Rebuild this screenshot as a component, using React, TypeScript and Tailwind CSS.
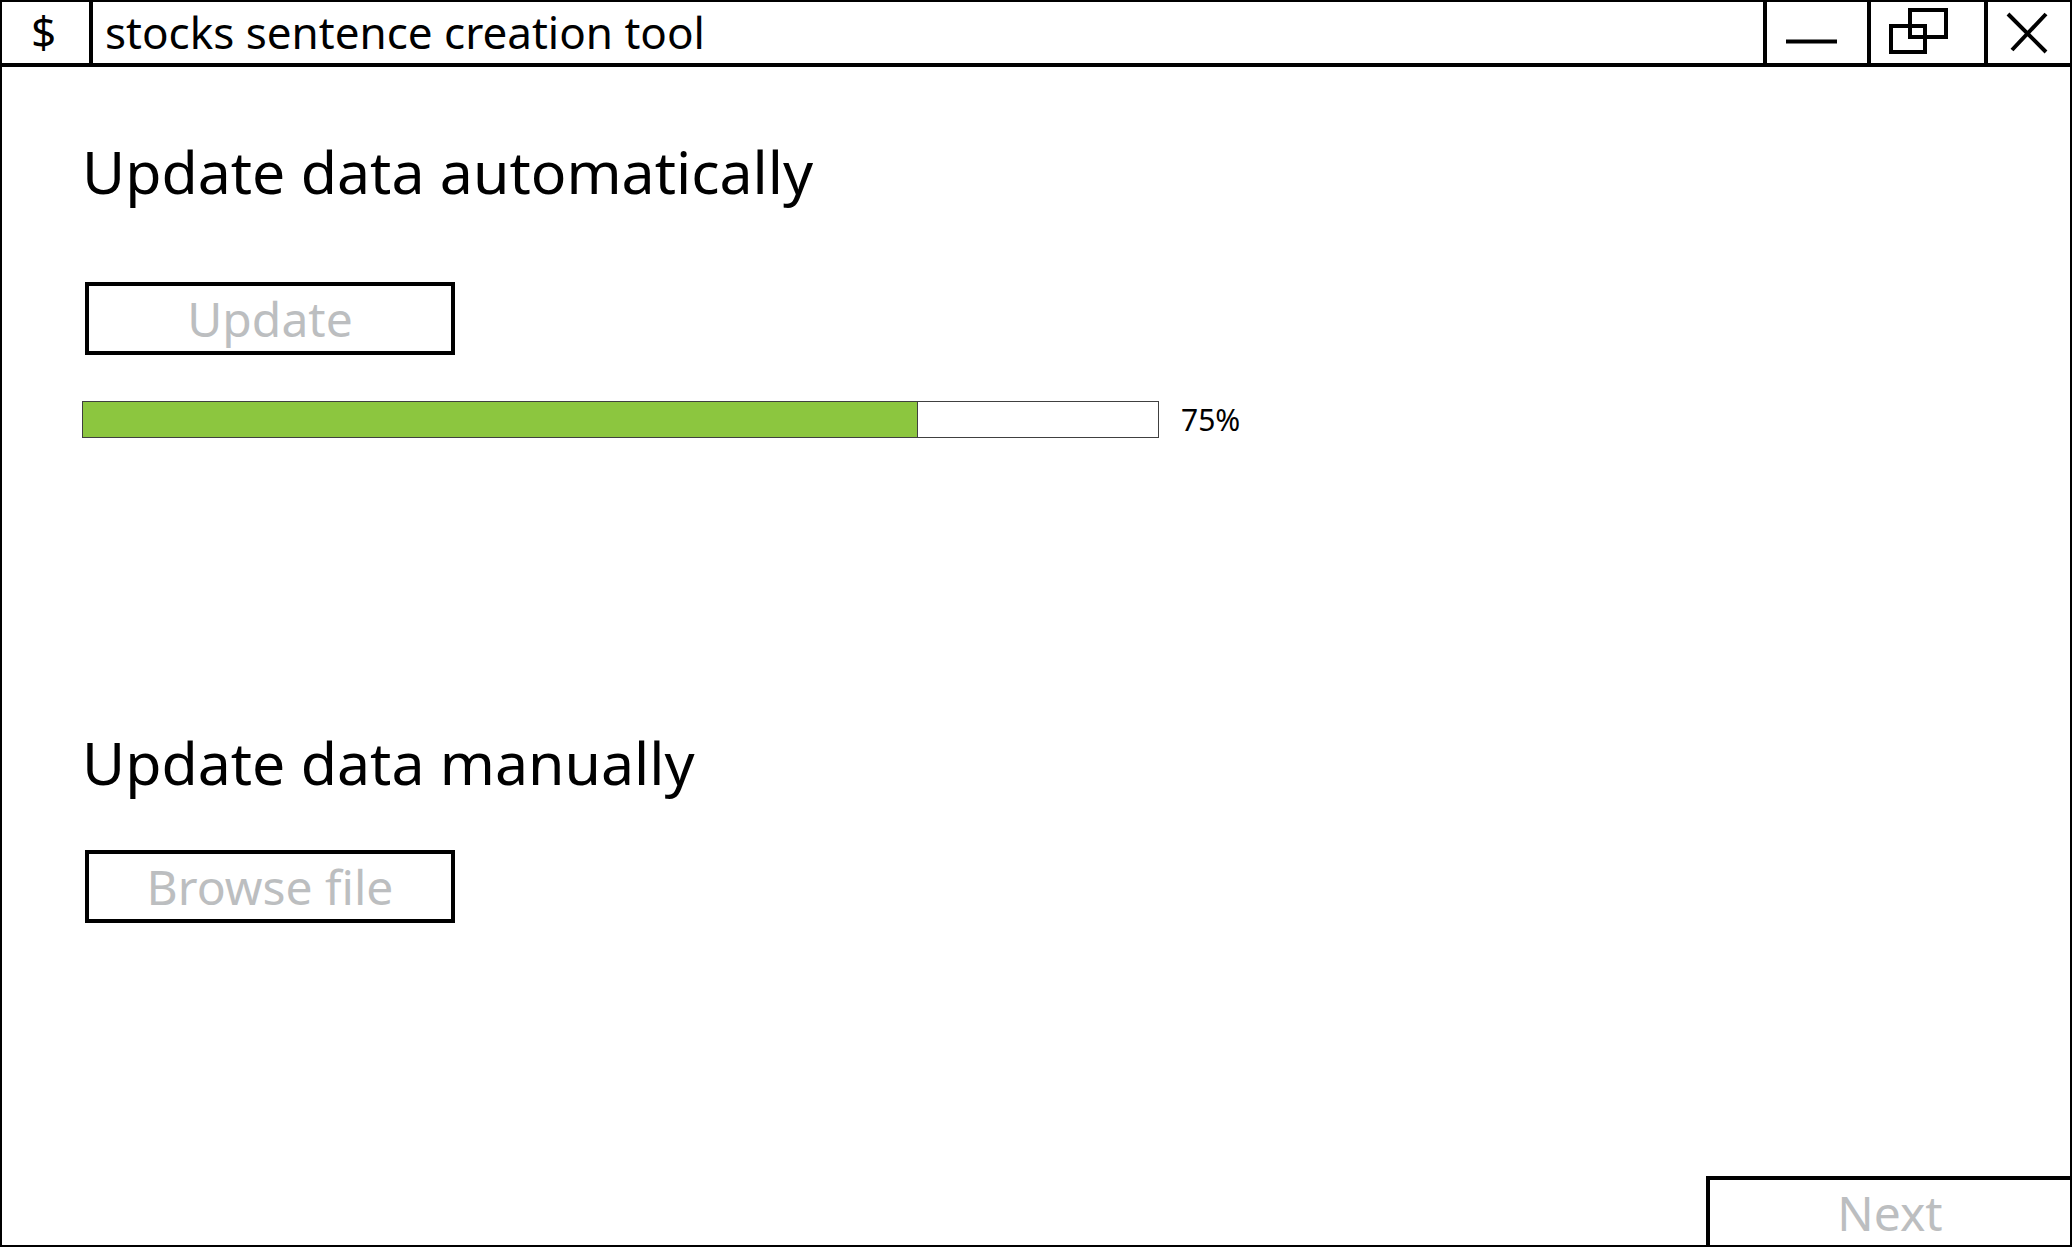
import type { ReactNode } from "react";

const PROGRESS = { label: "75%", value: 75, fill: 77.7 };

function WindowButton({ label, className, children }: { label: string; className: string; children: ReactNode }) {
  return (
    <button type="button" aria-label={label} className={`flex items-start border-l-4 border-black ${className}`}>
      {children}
    </button>
  );
}

function TitleBar() {
  return (
    <header className="flex h-[65px] items-stretch border-b-4 border-black">
      <div className="flex w-[91px] items-center justify-center border-r-4 border-black pb-1 pr-1 text-[44px] leading-none">
        $
      </div>
      <h1 className="flex flex-1 items-center whitespace-nowrap pb-0.5 pl-3 text-[44px] leading-none">
        stocks sentence creation tool
      </h1>
      <WindowButton label="Minimize" className="w-[104px] pl-[19px]">
        <svg width="52" height="60" viewBox="0 0 52 60" fill="none" stroke="black" strokeWidth="4">
          <path d="M0 39.5H51" />
        </svg>
      </WindowButton>
      <WindowButton label="Restore" className="w-[117px] pl-[18px]">
        <svg width="60" height="60" viewBox="0 0 60 60" fill="none" stroke="black" strokeWidth="4">
          <rect x="21" y="8" width="36" height="27" />
          <rect x="2" y="24" width="34" height="26" />
        </svg>
      </WindowButton>
      <WindowButton label="Close" className="w-[86px] pl-[18px]">
        <svg width="44" height="60" viewBox="0 0 44 60" fill="none" stroke="black" strokeWidth="4">
          <path d="M2 12L40 50M40 12L6 48" />
        </svg>
      </WindowButton>
    </header>
  );
}

function ActionButton({ children }: { children: ReactNode }) {
  return (
    <button
      type="button"
      className="ml-[3px] flex h-[73px] w-[370px] items-center justify-center border-4 border-black text-[48px] leading-none text-[#bcbec0]"
    >
      {children}
    </button>
  );
}

export default function App() {
  return (
    <div className="flex min-h-screen flex-col border-2 border-black bg-white font-['Noto_Sans',sans-serif] text-black">
      <TitleBar />
      <main className="flex flex-1 flex-col pl-20 pt-16">
        <section className="flex flex-col items-start">
          <h2 className="text-[59px] leading-[80px]">Update data automatically</h2>
          <div className="mt-[71px]">
            <ActionButton>Update</ActionButton>
          </div>
          <div className="mt-[46px] flex w-full items-center gap-[22px]">
            <div
              role="progressbar"
              aria-label="Update progress"
              aria-valuenow={PROGRESS.value}
              aria-valuemin={0}
              aria-valuemax={100}
              className="h-[37px] w-full max-w-[1077px] border border-neutral-700"
            >
              <div
                className="h-full border-r border-neutral-700 bg-[#8cc63f]"
                style={{ width: `${PROGRESS.fill}%` }}
              />
            </div>
            <span className="text-[30px] leading-9">{PROGRESS.label}</span>
          </div>
        </section>
        <section className="mt-[284px] flex flex-col items-start">
          <h2 className="text-[59px] leading-[80px]">Update data manually</h2>
          <div className="mt-12">
            <ActionButton>Browse file</ActionButton>
          </div>
        </section>
      </main>
      <footer className="flex justify-end">
        <button
          type="button"
          className="flex h-[69px] w-[364px] items-center justify-center border-l-4 border-t-4 border-black text-[48px] leading-none text-[#bcbec0]"
        >
          Next
        </button>
      </footer>
    </div>
  );
}
